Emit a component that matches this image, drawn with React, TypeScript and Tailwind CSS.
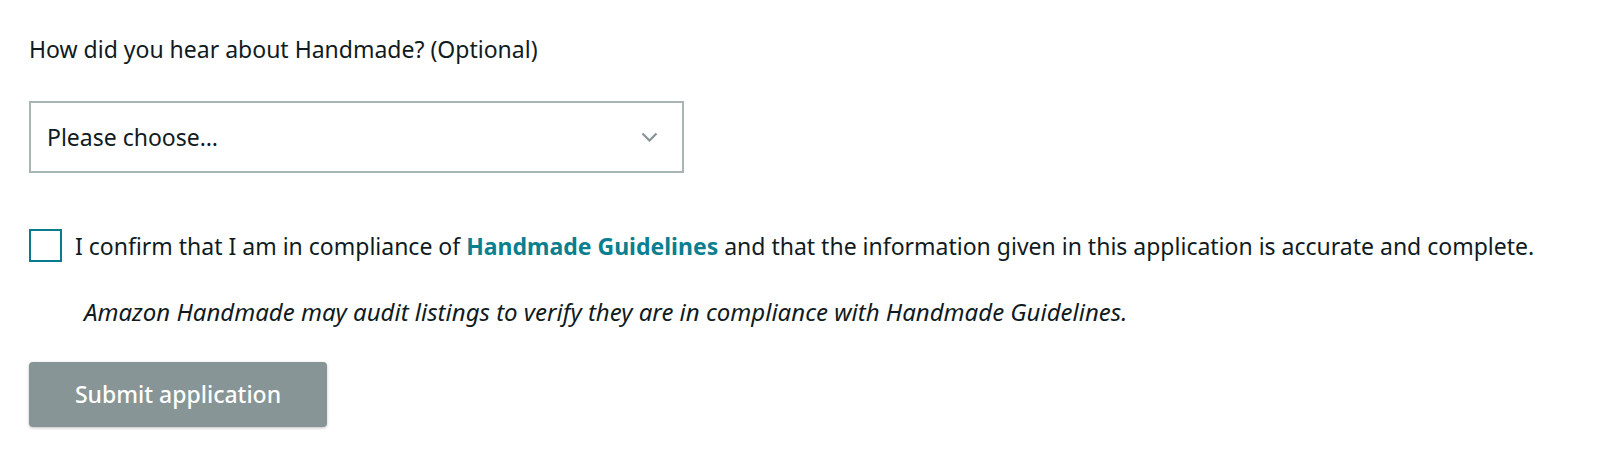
import React from 'react';

const HEAR_OPTIONS = ['Please choose…', 'Amazon.com', 'Social media', 'A friend', 'Other'];

const App = () => {
  return (
    <div
      className="w-full h-[455px] bg-white pl-[29px] pt-[34px] text-[#0f1b21]"
      style={{ fontFamily: '"Noto Sans", "Open Sans", Arial, sans-serif' }}
    >
      <label className="block text-[23px] leading-[30px]">How did you hear about Handmade? (Optional)</label>

      {/* select box */}
      <div className="mt-[37px] w-[655px] h-[72px] border-2 border-[#a9b5b5] flex items-center justify-between pl-[16px] pr-[24px]">
        <span className="text-[23px]">{HEAR_OPTIONS[0]}</span>
        <svg width="17" height="10" viewBox="0 0 17 10" fill="none">
          <path d="M1.5 1.5l7 7 7-7" stroke="#879596" strokeWidth="2.2" />
        </svg>
      </div>

      {/* confirm checkbox */}
      <div className="mt-[56px] flex items-center">
        <div className="w-[33px] h-[33px] border-2 border-[#0a7b8c] shrink-0" />
        <p className="ml-[13px] text-[23px] leading-[30px]">
          I confirm that I am in compliance of{' '}
          <a className="font-bold text-[#0a7f8f]">Handmade Guidelines</a> and that the information given in this
          application is accurate and complete.
        </p>
      </div>

      <p className="mt-[35px] pl-[55px] text-[24px] leading-[30px] italic">
        Amazon Handmade may audit listings to verify they are in compliance with Handmade Guidelines.
      </p>

      <button className="mt-[35px] w-[298px] h-[65px] rounded-[4px] bg-[#879596] text-white text-[23px] font-medium shadow-[0_1px_3px_rgba(0,0,0,0.25)]">
        Submit application
      </button>
    </div>
  );
};

export default App;
